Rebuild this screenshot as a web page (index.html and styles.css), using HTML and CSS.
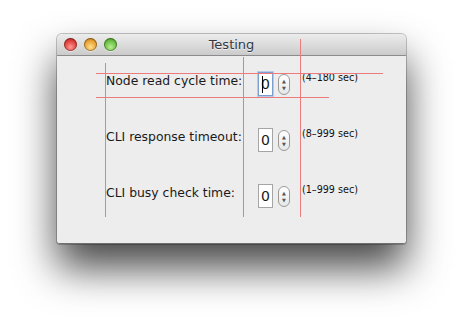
FILE: index.html
```html
<!DOCTYPE html>
<html lang="en">
<head>
  <meta charset="UTF-8" />
  <title>Testing</title>
  <link rel="stylesheet" href="styles.css">
</head>
<body>
  <div class="window">
    <div class="titlebar">
      <div class="lights">
        <span class="light red"></span>
        <span class="light yellow"></span>
        <span class="light green"></span>
      </div>
      <div class="title">Testing</div>
    </div>

    <div class="content">
      <div class="form">
        <label class="label">Node read cycle time:</label>
        <div class="field focused"><span class="caret"></span>0</div>
        <div class="stepper"><span class="up">&#9650;</span><span class="down">&#9660;</span></div>
        <div class="hint">(4–180 sec)</div>

        <label class="label">CLI response timeout:</label>
        <div class="field">0</div>
        <div class="stepper"><span class="up">&#9650;</span><span class="down">&#9660;</span></div>
        <div class="hint">(8–999 sec)</div>

        <label class="label">CLI busy check time:</label>
        <div class="field">0</div>
        <div class="stepper"><span class="up">&#9650;</span><span class="down">&#9660;</span></div>
        <div class="hint">(1–999 sec)</div>
      </div>
    </div>

    <!-- layout debug lines -->
    <div class="guide v v1"></div>
    <div class="guide v v2"></div>
    <div class="guide v v3"></div>
    <div class="guide h h1"></div>
    <div class="guide h h2"></div>
  </div>
</body>
</html>
```

FILE: styles.css
```css
html, body {
  margin: 0;
  padding: 0;
  background: #fff;
}
body {
  min-height: 322px;
  padding: 34px 0 79px;
  box-sizing: border-box;
  font-family: 'DejaVu Sans', 'Liberation Sans', sans-serif;
  color: #1a1a1a;
}
.window {
  position: relative;
  width: 349px;
  margin: 0 auto;
  border-radius: 5px 5px 3px 3px;
  box-shadow: 0 24px 40px rgba(0,0,0,0.72), 0 0 0 1px rgba(0,0,0,0.22);
  background: #ededed;
}
.titlebar {
  position: relative;
  height: 21px;
  border-bottom: 1px solid #8c8c8c;
  border-radius: 5px 5px 0 0;
  background: linear-gradient(#ececec, #dcdcdc 50%, #cbcbcb);
  display: flex;
  align-items: center;
}
.lights {
  display: flex;
  gap: 7px;
  padding-left: 7px;
}
.light {
  width: 13px;
  height: 13px;
  border-radius: 50%;
  box-shadow: inset 0 0 0 1px rgba(0,0,0,0.35), 0 1px 0 rgba(255,255,255,0.5);
}
.red { background: radial-gradient(circle at 50% 70%, #ff9a95, #e0413c 55%, #a81c1c); }
.yellow { background: radial-gradient(circle at 50% 70%, #ffe08a, #e9a233 55%, #a86a10); }
.green { background: radial-gradient(circle at 50% 70%, #b8ef8f, #6bbf44 55%, #3b8a1c); }
.title {
  position: absolute;
  left: 0;
  right: 0;
  text-align: center;
  font-size: 13px;
  color: #333a44;
  text-shadow: 0 1px 0 rgba(255,255,255,0.6);
}
.content {
  height: 187px;
  border-radius: 0 0 3px 3px;
  border-bottom: 1px solid #707070;
}
.form {
  display: grid;
  grid-template-columns: 147px 15px 12px auto;
  grid-template-rows: 24px 24px 24px;
  column-gap: 5px;
  row-gap: 32px;
  padding: 16px 0 0 49px;
}
.label {
  font-size: 12.4px;
  line-height: 15px;
  padding-top: 1px;
  white-space: nowrap;
}
.field {
  box-sizing: border-box;
  height: 24px;
  background: #fff;
  border: 1px solid #a5a5a5;
  font-size: 14px;
  line-height: 22px;
  text-align: center;
  position: relative;
}
.field.focused {
  border-color: #7d9fcf;
  box-shadow: 0 0 0 1px #b6cbe8;
}
.caret {
  position: absolute;
  left: 3px;
  top: 3px;
  width: 1px;
  height: 17px;
  background: #000;
}
.stepper {
  box-sizing: border-box;
  margin-top: 2px;
  height: 21px;
  border: 1px solid #9a9a9a;
  border-radius: 6px;
  background: linear-gradient(#ffffff, #e6e6e6);
  display: flex;
  flex-direction: column;
  align-items: center;
  justify-content: center;
  font-size: 5px;
  line-height: 7px;
  color: #555;
}
.hint {
  font-size: 9.6px;
  line-height: 12px;
  margin-left: 7px;
  white-space: nowrap;
  color: #111;
}
.guide {
  position: absolute;
  background: #ee7b7b;
}
.v { width: 1px; }
.h { height: 1px; }
.v1 { left: 48px; top: 29px; height: 154px; }
.v2 { left: 186px; top: 23px; height: 160px; }
.v3 { left: 243px; top: 5px; height: 178px; }
.h1 { top: 39px; left: 39px; width: 287px; }
.h2 { top: 63px; left: 39px; width: 233px; }
```
